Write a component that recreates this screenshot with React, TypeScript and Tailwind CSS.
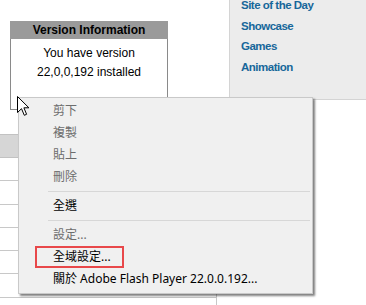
import React from "react";

const links = ["Site of the Day", "Showcase", "Games", "Animation"];

type Item = { label: string; disabled?: boolean; highlight?: boolean } | "sep";

const menuItems: Item[] = [
  { label: "剪下", disabled: true },
  { label: "複製", disabled: true },
  { label: "貼上", disabled: true },
  { label: "刪除", disabled: true },
  "sep",
  { label: "全選" },
  "sep",
  { label: "設定...", disabled: true },
  { label: "全域設定...", highlight: true },
  { label: "關於 Adobe Flash Player 22.0.0.192..." },
];

const ContextMenu = () => (
  <div className="absolute left-[18px] top-[97px] w-[295px] h-[197px] bg-[#f0f0f0] border border-[#c9c9c9] pt-[2px] shadow-[2px_2px_2px_rgba(0,0,0,0.5)] font-['Noto_Sans','Noto_Sans_CJK_TC',sans-serif] text-[12px]">
    {menuItems.map((item, i) =>
      item === "sep" ? (
        <div key={i} className="h-[7px] flex items-center ml-[29px] mr-[2px]">
          <div className="h-px w-full bg-[#d7d7d7]" />
        </div>
      ) : (
        <div key={i} className={`relative h-[22px] flex items-center pl-[34px] ${item.disabled ? "text-[#6d6d6d]" : "text-black"}`}>
          {item.highlight && (
            <div className="absolute left-[16px] top-0 w-[89px] h-[22px] border-2 border-[#e8484a]" />
          )}
          <span className="whitespace-nowrap">{item.label}</span>
        </div>
      )
    )}
  </div>
);

const Cursor = () => (
  <svg className="absolute left-[17px] top-[96px]" width="13" height="21" viewBox="0 0 13 21">
    <path d="M0.5 0.5 L0.5 16.5 L4.5 12.7 L7.3 19.3 L9.6 18.3 L6.9 11.8 L11.9 11.8 Z" fill="white" stroke="black" strokeWidth="1" strokeLinejoin="miter" />
  </svg>
);

export default function App() {
  return (
    <div className="relative w-[366px] h-[305px] overflow-hidden bg-white font-['Liberation_Sans',Arial,sans-serif]">
      <div className="flex items-start">
        {/* version box */}
        <div className="w-[229px] pt-[21px] pl-[10px]">
          <div className="w-[158px]">
            <div className="h-[18px] bg-[#9a9a9a] text-center text-[12px] font-bold leading-[18px] text-black">
              Version Information
            </div>
            <div className="h-[71px] border-x border-b border-[#8a8a8a] pt-[5px] text-center text-[12px] leading-[19px] text-black">
              <div>You have version</div>
              <div>22,0,0,192 installed</div>
            </div>
          </div>
        </div>
        {/* side nav */}
        <div className="flex-1 h-[100px] bg-[#ececec] border-l border-b border-[#d4d4d4] pl-[11px] overflow-hidden">
          <div className="-mt-[5px] flex flex-col">
            {links.map((l) => (
              <div key={l} className="text-[11.5px] font-bold leading-[20.5px] tracking-[-0.5px] text-[#17679a]">
                {l}
              </div>
            ))}
          </div>
        </div>
      </div>

      {/* table under the menu */}
      <div className="mt-[24px] w-[217px] border-r border-[#c8c8c8]">
        <div className="h-[24px] bg-[#d6d6d6] border-y border-[#c2c2c2]" />
        {[0, 1, 2, 3, 4, 5, 6].map((r) => (
          <div key={r} className="h-[23.3px] border-b border-[#c8c8c8]" />
        ))}
      </div>

      <ContextMenu />
      <Cursor />
    </div>
  );
}
